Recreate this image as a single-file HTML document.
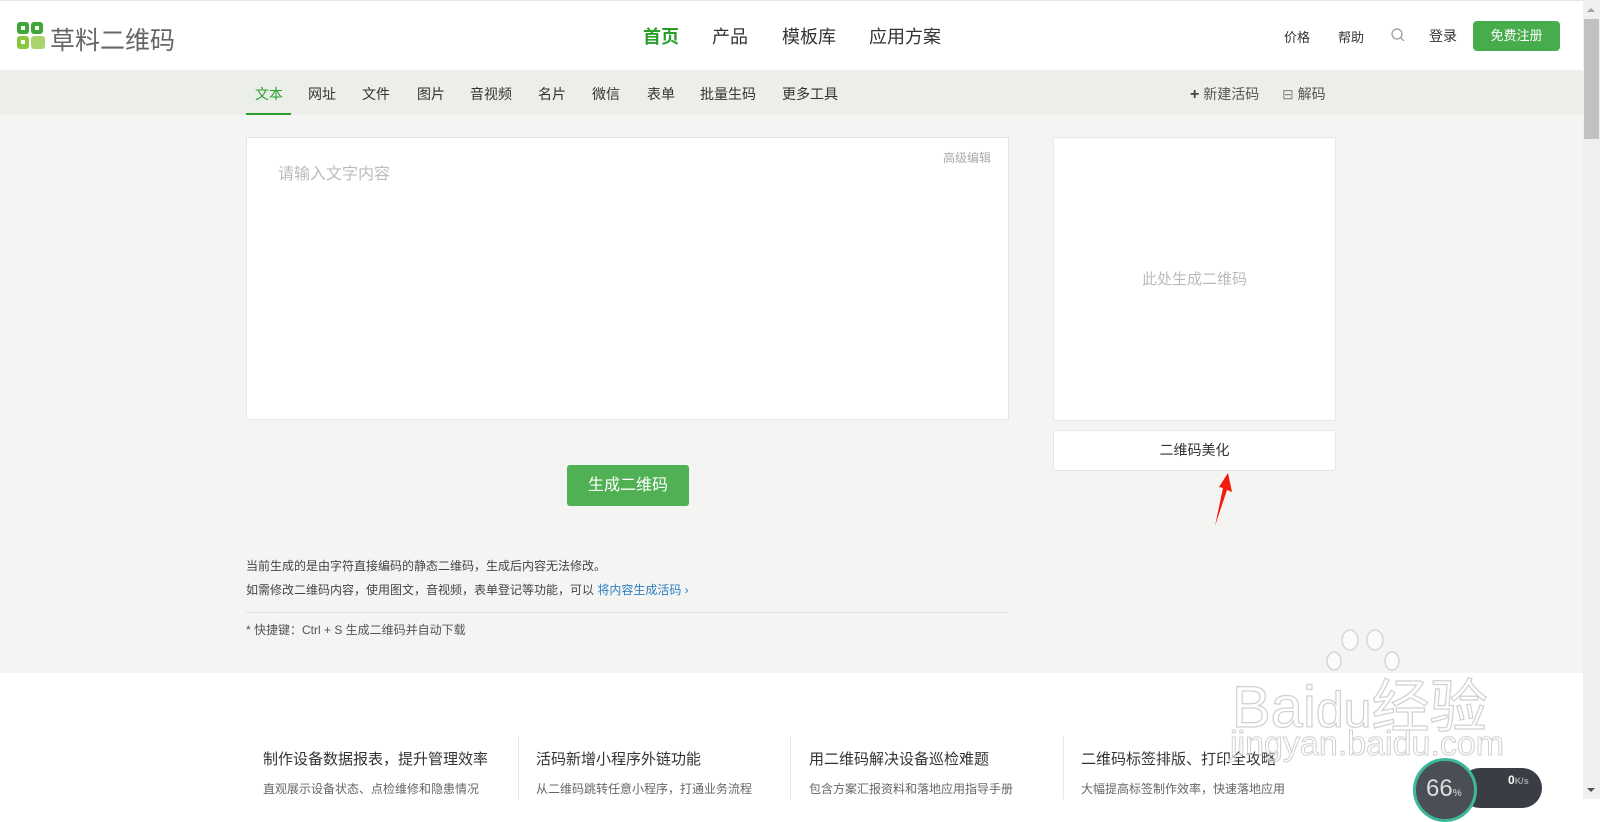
<!DOCTYPE html>
<html><head><meta charset="utf-8"><style>
*{margin:0;padding:0;box-sizing:border-box}
body{width:1600px;height:799px;overflow:hidden;font-family:"Liberation Sans","Noto Sans CJK SC",sans-serif;background:#fff;position:relative;color:#333}
.a{position:absolute;white-space:nowrap}
</style></head><body>
<div class="a" style="left:0;top:0;width:1583px;height:1px;background:#e5e5e5"></div>
<!-- logo -->
<div class="a" style="left:17px;top:22px;width:12px;height:12px;background:#3fa63a;border-radius:3px"></div>
<div class="a" style="left:31px;top:22px;width:12px;height:12px;background:#3fa63a;border-radius:3px"></div>
<div class="a" style="left:17px;top:36px;width:12px;height:13px;background:#8cc63f;border-radius:3px"></div>
<div class="a" style="left:31px;top:36px;width:14px;height:13px;background:#a9d46a;border-radius:3px"></div>
<div class="a" style="left:21px;top:26px;width:4px;height:4px;background:#fff"></div>
<div class="a" style="left:35px;top:26px;width:4px;height:4px;background:#fff"></div>
<div class="a" style="left:21px;top:40px;width:4px;height:4px;background:#fff"></div>
<div class="a" style="left:50px;top:21px;font-size:25px;color:#666">草料二维码</div>
<!-- top nav -->
<div class="a" style="left:643px;top:23px;font-size:18px;color:#2aa02a;font-weight:bold">首页</div>
<div class="a" style="left:712px;top:23px;font-size:18px;color:#333">产品</div>
<div class="a" style="left:782px;top:23px;font-size:18px;color:#333">模板库</div>
<div class="a" style="left:869px;top:23px;font-size:18px;color:#333">应用方案</div>
<div class="a" style="left:1284px;top:27px;font-size:13px;color:#333">价格</div>
<div class="a" style="left:1338px;top:27px;font-size:13px;color:#333">帮助</div>
<svg class="a" style="left:1391px;top:28px" width="14" height="14"><circle cx="6" cy="6" r="5" fill="none" stroke="#999" stroke-width="1.2"/><line x1="9.5" y1="9.5" x2="13" y2="13" stroke="#999" stroke-width="1.2"/></svg>
<div class="a" style="left:1429px;top:26px;font-size:14px;color:#333">登录</div>
<div class="a" style="left:1473px;top:21px;width:87px;height:30px;background:#47ad4c;border-radius:4px;color:#fff;font-size:13px;line-height:30px;text-align:center">免费注册</div>
<!-- subnav -->
<div class="a" style="left:0;top:70px;width:1583px;height:45px;background:#eceee9"></div>
<div class="a" style="left:0;top:115px;width:1583px;height:558px;background:#f4f5f3"></div>
<div class="a" style="top:84px;left:255px;font-size:14px;color:#2aa02a">文本</div>
<div class="a" style="left:246px;top:113px;width:45px;height:2px;background:#2aa02a"></div>
<div class="a" style="top:84px;left:308px;font-size:14px;color:#333">网址</div>
<div class="a" style="top:84px;left:362px;font-size:14px;color:#333">文件</div>
<div class="a" style="top:84px;left:417px;font-size:14px;color:#333">图片</div>
<div class="a" style="top:84px;left:470px;font-size:14px;color:#333">音视频</div>
<div class="a" style="top:84px;left:538px;font-size:14px;color:#333">名片</div>
<div class="a" style="top:84px;left:592px;font-size:14px;color:#333">微信</div>
<div class="a" style="top:84px;left:647px;font-size:14px;color:#333">表单</div>
<div class="a" style="top:84px;left:700px;font-size:14px;color:#333">批量生码</div>
<div class="a" style="top:84px;left:782px;font-size:14px;color:#333">更多工具</div>
<div class="a" style="top:84px;left:1190px;font-size:14px;color:#555"><b style="font-size:16px;color:#444">+</b> 新建活码</div>
<div class="a" style="top:84px;left:1282px;font-size:14px;color:#555"><span style="color:#888">⊟</span> 解码</div>
<!-- textarea -->
<div class="a" style="left:246px;top:137px;width:763px;height:283px;background:#fff;border:1px solid #e6e6e6"></div>
<div class="a" style="left:278px;top:160px;font-size:16px;color:#bbb">请输入文字内容</div>
<div class="a" style="left:943px;top:149px;font-size:12px;color:#aaa">高级编辑</div>
<div class="a" style="left:567px;top:465px;width:122px;height:41px;background:#4fb153;border-radius:3px;color:#fff;font-size:16px;line-height:41px;text-align:center">生成二维码</div>
<div class="a" style="left:246px;top:557px;font-size:12px;color:#444">当前生成的是由字符直接编码的静态二维码，生成后内容无法修改。</div>
<div class="a" style="left:246px;top:581px;font-size:12px;color:#444">如需修改二维码内容，使用图文，音视频，表单登记等功能，可以 <span style="color:#2d7dc1">将内容生成活码 ›</span></div>
<div class="a" style="left:246px;top:612px;width:763px;height:1px;background:#e3e3e3"></div>
<div class="a" style="left:246px;top:621px;font-size:12px;color:#555">* 快捷键：Ctrl + S 生成二维码并自动下载</div>
<!-- qr -->
<div class="a" style="left:1053px;top:137px;width:283px;height:284px;background:#fff;border:1px solid #e8e8e8"></div>
<div class="a" style="left:1053px;top:268px;width:283px;text-align:center;font-size:15px;color:#bbb">此处生成二维码</div>
<div class="a" style="left:1053px;top:430px;width:283px;height:41px;background:#fff;border:1px solid #e6e6e6;border-radius:3px;text-align:center;line-height:39px;font-size:14px;color:#333">二维码美化</div>
<svg class="a" style="left:1205px;top:470px" width="30" height="60"><polygon points="23,3 27,22 22,20 10,56 18,18 14,17" fill="#f21c0e"/></svg>
<!-- articles -->
<div class="a" style="left:263px;top:748px;font-size:15px;color:#333">制作设备数据报表，提升管理效率</div>
<div class="a" style="left:263px;top:780px;font-size:12px;color:#666">直观展示设备状态、点检维修和隐患情况</div>
<div class="a" style="left:518px;top:736px;width:1px;height:63px;background:#e8e8e8"></div>
<div class="a" style="left:536px;top:748px;font-size:15px;color:#333">活码新增小程序外链功能</div>
<div class="a" style="left:536px;top:780px;font-size:12px;color:#666">从二维码跳转任意小程序，打通业务流程</div>
<div class="a" style="left:790px;top:736px;width:1px;height:63px;background:#e8e8e8"></div>
<div class="a" style="left:809px;top:748px;font-size:15px;color:#333">用二维码解决设备巡检难题</div>
<div class="a" style="left:809px;top:780px;font-size:12px;color:#666">包含方案汇报资料和落地应用指导手册</div>
<div class="a" style="left:1063px;top:736px;width:1px;height:63px;background:#e8e8e8"></div>
<div class="a" style="left:1081px;top:748px;font-size:15px;color:#333">二维码标签排版、打印全攻略</div>
<div class="a" style="left:1081px;top:780px;font-size:12px;color:#666">大幅提高标签制作效率，快速落地应用</div>
<!-- watermark -->
<svg class="a" style="left:1320px;top:625px" width="90" height="80"><g fill="rgba(255,255,255,.6)" stroke="#d5d5d5" stroke-width="1.5"><ellipse cx="30" cy="15" rx="8" ry="10"/><ellipse cx="55" cy="15" rx="8" ry="10"/><ellipse cx="14" cy="36" rx="7" ry="9"/><ellipse cx="72" cy="36" rx="7" ry="9"/></g></svg>
<div class="a" style="left:1232px;top:660px;font-size:58px;color:rgba(255,255,255,.5);-webkit-text-stroke:1.2px #d0d0d0">Bai<span style="font-size:50px">du</span>经验</div>
<div class="a" style="left:1230px;top:725px;font-size:34px;color:rgba(255,255,255,.5);-webkit-text-stroke:1px #d0d0d0">jingyan.baidu.com</div>
<!-- speed widget -->
<div class="a" style="left:1460px;top:768px;width:82px;height:40px;background:#3a3d44;border-radius:20px"></div>
<div class="a" style="left:1413px;top:758px;width:64px;height:64px;border-radius:50%;background:#4a4e56;border:3px solid #3db89a;color:#ddd;font-size:24px;padding:14px 0 0 10px">66<span style="font-size:10px">%</span></div>
<div class="a" style="left:1508px;top:773px;font-size:12px;color:#fff;font-weight:bold">0<span style="font-size:9px;color:#aaa">K/s</span></div>
<!-- scrollbar -->
<div class="a" style="left:1583px;top:0;width:17px;height:799px;background:#f0f0f0"></div>
<div class="a" style="left:1584px;top:19px;width:15px;height:120px;background:#c1c1c1"></div>
<div class="a" style="left:1587px;top:8px;width:0;height:0;border-left:4px solid transparent;border-right:4px solid transparent;border-bottom:4px solid #a3a3a3"></div>
<div class="a" style="left:1587px;top:788px;width:0;height:0;border-left:4px solid transparent;border-right:4px solid transparent;border-top:4px solid #505050"></div>
</body></html>
